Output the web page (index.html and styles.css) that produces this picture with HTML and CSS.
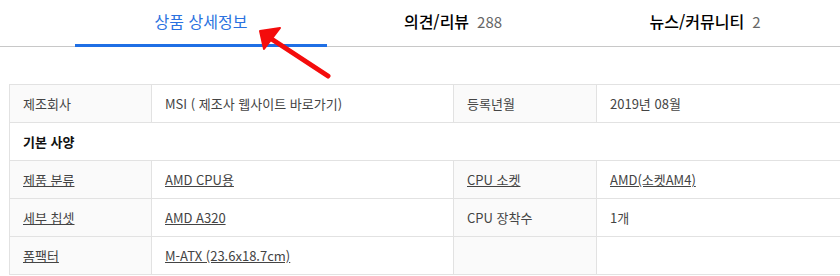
FILE: index.html
```html
<!DOCTYPE html>
<html lang="ko">
<head>
<meta charset="utf-8">
<link rel="stylesheet" href="styles.css">
</head>
<body>
<div class="page">
  <nav class="tabs">
    <div class="tab active">상품 상세정보</div>
    <div class="tab">의견/리뷰<span class="count">288</span></div>
    <div class="tab">뉴스/커뮤니티<span class="count">2</span></div>
  </nav>
  <svg class="arrow" width="90" height="70" viewBox="250 20 90 70">
    <line x1="328" y1="76" x2="270" y2="38" stroke="#f40c0c" stroke-width="5" stroke-linecap="round"/>
    <polygon points="260,31 280,28 264,49" fill="#f40c0c" stroke="#f40c0c" stroke-width="2" stroke-linejoin="round"/>
  </svg>
  <div class="spec-wrap">
    <table class="spec">
      <colgroup>
        <col class="c-label"><col class="c-value"><col class="c-label2"><col class="c-value">
      </colgroup>
      <tr>
        <th>제조회사</th>
        <td>MSI ( 제조사 웹사이트 바로가기)</td>
        <th>등록년월</th>
        <td>2019년 08월</td>
      </tr>
      <tr>
        <td class="group" colspan="4">기본 사양</td>
      </tr>
      <tr>
        <th><a href="#">제품 분류</a></th>
        <td><a href="#">AMD CPU용</a></td>
        <th><a href="#">CPU 소켓</a></th>
        <td><a href="#">AMD(소켓AM4)</a></td>
      </tr>
      <tr>
        <th><a href="#">세부 칩셋</a></th>
        <td><a href="#">AMD A320</a></td>
        <th>CPU 장착수</th>
        <td>1개</td>
      </tr>
      <tr>
        <th><a href="#">폼팩터</a></th>
        <td><a href="#">M-ATX (23.6x18.7cm)</a></td>
        <th></th>
        <td></td>
      </tr>
    </table>
  </div>
</div>
</body>
</html>
```
FILE: styles.css
```css
html, body {
  margin: 0;
  padding: 0;
  background: #fff;
  overflow: hidden;
}
.page {
  position: relative;
  width: 840px;
  height: 276px;
  overflow: hidden;
  font-family: "Noto Sans CJK KR", "Noto Sans", sans-serif;
  color: #444;
}
.tabs {
  display: flex;
  height: 46px;
  padding-left: 75px;
  border-bottom: 1px solid #c8c8c8;
}
.tab {
  position: relative;
  width: 252px;
  display: flex;
  justify-content: center;
  align-items: baseline;
  padding-top: 9px;
  box-sizing: border-box;
  font-size: 16px;
  line-height: 24px;
  font-weight: 500;
  color: #000;
}
.tab.active {
  color: #2a72e0;
  font-weight: normal;
}
.tab.active::after {
  content: "";
  position: absolute;
  left: 0;
  right: 0;
  bottom: -1px;
  height: 3px;
  background: #1f6fe5;
}
.count {
  margin-left: 8px;
  font-size: 15px;
  font-weight: normal;
  color: #666;
}
.arrow {
  position: absolute;
  left: 250px;
  top: 20px;
}
.spec-wrap {
  padding: 37px 0 0 9px;
}
.spec {
  width: 889px;
  table-layout: fixed;
  border-collapse: collapse;
  font-size: 13px;
}
.c-label { width: 142px; }
.c-value { width: 302px; }
.c-label2 { width: 143px; }
.spec th, .spec td {
  height: 37px;
  padding: 0 0 0 13px;
  border: 1px solid #e2e2e2;
  text-align: left;
  font-weight: normal;
  color: #444;
  line-height: 20px;
  white-space: nowrap;
}
.spec th {
  background: #fafafa;
}
.spec td {
  background: #fff;
}
.spec td.group {
  font-weight: bold;
  color: #111;
}
.spec a {
  color: #444;
  text-decoration: underline;
}
```
